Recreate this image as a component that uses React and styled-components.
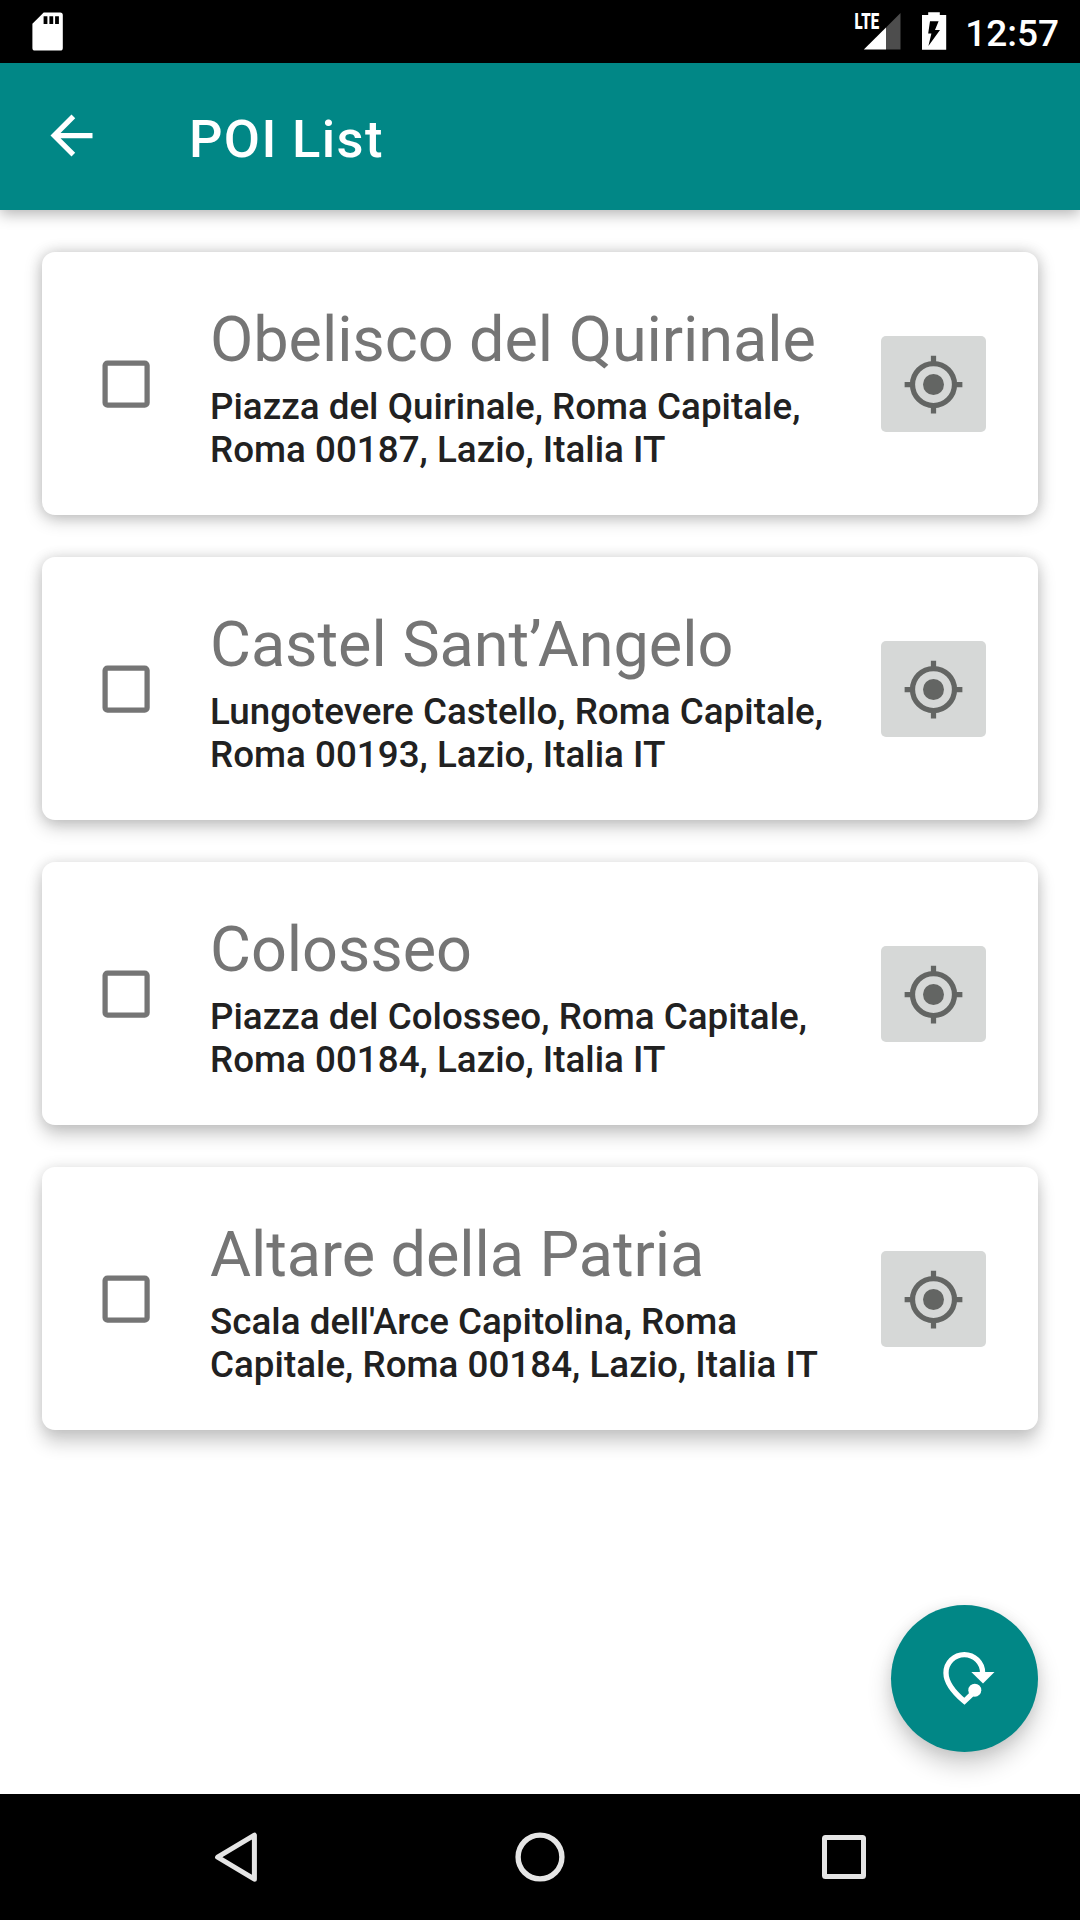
import React from "react";
import styled, { createGlobalStyle } from "styled-components";

const GlobalStyle = createGlobalStyle`
  * { box-sizing: border-box; }
  body { margin: 0; background: #fff; font-family: Roboto, "Noto Sans", sans-serif; }
`;

const Screen = styled.div`
  width: 1080px;
  height: 1920px;
  display: flex;
  flex-direction: column;
  position: relative;
  overflow: hidden;
  background: #fff;
`;

const StatusBar = styled.div`
  height: 63px;
  flex: none;
  display: flex;
  justify-content: space-between;
  background: #000;
  padding: 0 21px 0 26px;
`;

const StatusGroup = styled.div`
  display: flex;
`;

const Clock = styled.time`
  width: 95px;
  padding-top: 2px;
  text-align: right;
  color: #fff;
  font-size: 37px;
  font-weight: 500;
  line-height: 64px;
  white-space: nowrap;
`;

const AppBar = styled.header`
  height: 147px;
  flex: none;
  display: flex;
  align-items: center;
  background: #018786;
  padding-left: 39.5px;
  box-shadow: 0 4px 14px rgba(0, 0, 0, 0.3);
  z-index: 1;
`;

const BackButton = styled.button`
  width: 63px;
  height: 63px;
  margin: 0 86.5px 2px 0;
  padding: 0;
  border: 0;
  background: none;
  color: #fff;
`;

const ScreenTitle = styled.h1`
  margin: 4px 0 0;
  color: #fff;
  font-size: 52.5px;
  font-weight: 500;
  letter-spacing: 0.026em;
  line-height: 62px;
`;

const List = styled.main`
  flex: 1;
  display: flex;
  flex-direction: column;
  gap: 42px;
  padding: 42px;
`;

const Card = styled.article`
  height: 263px;
  display: flex;
  align-items: flex-start;
  border-radius: 13px;
  background: #fff;
  padding: 51px 52px 0 52px;
  box-shadow: 0 ${(p) => p.$lift}px 18px rgba(0, 0, 0, ${(p) => p.$shade}), 0 0 14px rgba(0, 0, 0, 0.12);
`;

const Checkbox = styled.button`
  width: 64px;
  height: 64px;
  margin: 49px 52px 0 0;
  padding: 0;
  border: 0;
  background: none;
  color: #757575;
`;

const Details = styled.div`
  width: 650px;
  flex: none;
`;

const Name = styled.h2`
  margin: 0 0 8px;
  color: #757575;
  font-size: 63px;
  font-weight: 400;
  letter-spacing: -0.08px;
  line-height: 74px;
  white-space: nowrap;
`;

const Address = styled.p`
  margin: 0;
  color: #212121;
  font-size: 36.75px;
  font-weight: 500;
  letter-spacing: 0.02px;
  line-height: 43px;
`;

const LocateButton = styled.button`
  width: 105px;
  height: 96px;
  flex: none;
  display: flex;
  align-items: center;
  justify-content: center;
  margin: 33px 0 0 21px;
  padding: 0;
  border: 0;
  border-radius: 5px;
  background: #d6d8d7;
  color: #636563;
`;

const Fab = styled.button`
  position: absolute;
  right: 42px;
  bottom: 168px;
  width: 147px;
  height: 147px;
  padding: 0;
  border: 0;
  border-radius: 50%;
  background: #018786;
  color: #fff;
  box-shadow: 0 13px 24px rgba(0, 0, 0, 0.2), 0 2px 14px rgba(0, 0, 0, 0.08);
`;

const NavBar = styled.nav`
  height: 126px;
  flex: none;
  display: flex;
  justify-content: center;
  gap: 178px;
  background: #000;
`;

const NavButton = styled.button`
  width: 126px;
  height: 126px;
  padding: 0;
  border: 0;
  background: none;
  color: #e5e5e5;
`;

const Icon = styled.svg`
  display: block;
  flex: none;
  fill: currentColor;
`;

const places = [
  { name: "Obelisco del Quirinale", address: "Piazza del Quirinale, Roma Capitale, Roma 00187, Lazio, Italia IT", lift: 4, shade: 0.23 },
  { name: "Castel Sant’Angelo", address: "Lungotevere Castello, Roma Capitale, Roma 00193, Lazio, Italia IT", lift: 7, shade: 0.21 },
  { name: "Colosseo", address: "Piazza del Colosseo, Roma Capitale, Roma 00184, Lazio, Italia IT", lift: 10, shade: 0.2 },
  { name: "Altare della Patria", address: "Scala dell'Arce Capitolina, Roma Capitale, Roma 00184, Lazio, Italia IT", lift: 13, shade: 0.19 },
];

const SdCardIcon = () => (
  <Icon width="44" height="63" viewBox="26 0 44 63" color="#fff">
    <path d="M43.7 12.5H60.2a2.6 2.6 0 0 1 2.6 2.6V48a2.6 2.6 0 0 1-2.6 2.6H35a2.6 2.6 0 0 1-2.6-2.6V23.8Z" />
    <path fill="#000" d="M43.6 16.2h3.8V24h-3.8zM49.4 16.2h3.8V24h-3.8zM55.1 16.2h3.8V24h-3.8z" />
  </Icon>
);

const SignalIcon = () => (
  <Icon width="62" height="63" viewBox="850 0 62 63" color="#fff">
    <path fill="#4d4d4d" d="M900.5 13v36.6H886V27.5Z" />
    <path d="M886 27.5v22.1h-22.2Z" />
    <text x="854.6" y="29" fontFamily="Roboto, sans-serif" fontSize="22" fontWeight="900" textLength="24.5" lengthAdjust="spacingAndGlyphs">LTE</text>
  </Icon>
);

const BatteryIcon = () => (
  <Icon width="52" height="63" viewBox="912 0 52 63" color="#fff">
    <path d="M928.2 12.2h11.6V15h6.4v34.8H922V15h6.2Z" />
    <path fill="#000" d="M930 21.2h8.6L935 30h5L928.4 46l3-12.4h-3.2Z" />
  </Icon>
);

const LocateIcon = () => (
  <Icon width="63" height="63" viewBox="0 0 24 24">
    <circle cx="12" cy="12" r="4" />
    <circle cx="12" cy="12" r="8" fill="none" stroke="currentColor" strokeWidth="2" />
    <path d="M11 1h2v3h-2zM11 20h2v3h-2zM1 11h3v2H1zM20 11h3v2h-3z" />
  </Icon>
);

const RouteIcon = () => (
  <Icon width="147" height="147" viewBox="0 0 147 147">
    <path
      d="M91.6 69V67.9A18.3 18.3 0 0 0 55 67.9C55 78 63 87.5 73.4 96.3L82 88"
      fill="none"
      stroke="currentColor"
      strokeWidth="5.3"
    />
    <path d="M80.3 67h23.2L92 78.6Z" />
    <circle cx="83.8" cy="85.2" r="6.5" />
  </Icon>
);

export default function App() {
  return (
    <>
      <GlobalStyle />
      <Screen>
        <StatusBar>
          <SdCardIcon />
          <StatusGroup>
            <SignalIcon />
            <BatteryIcon />
            <Clock>12:57</Clock>
          </StatusGroup>
        </StatusBar>
        <AppBar>
          <BackButton aria-label="Back">
            <Icon width="63" height="63" viewBox="0 0 24 24">
              <path d="M20 11H7.83l5.59-5.59L12 4l-8 8 8 8 1.41-1.41L7.83 13H20v-2z" />
            </Icon>
          </BackButton>
          <ScreenTitle>POI List</ScreenTitle>
        </AppBar>
        <List>
          {places.map((place) => (
            <Card key={place.name} $lift={place.lift} $shade={place.shade}>
              <Checkbox role="checkbox" aria-checked="false" aria-label={place.name}>
                <Icon width="64" height="64" viewBox="0 0 64 64">
                  <rect x="11.1" y="11.2" width="42" height="42" rx="2.4" fill="none" stroke="currentColor" strokeWidth="5.25" />
                </Icon>
              </Checkbox>
              <Details>
                <Name>{place.name}</Name>
                <Address>{place.address}</Address>
              </Details>
              <LocateButton aria-label="Locate">
                <LocateIcon />
              </LocateButton>
            </Card>
          ))}
        </List>
        <Fab aria-label="Plan route">
          <RouteIcon />
        </Fab>
        <NavBar>
          <NavButton aria-label="Back">
            <Icon width="126" height="126" viewBox="0 0 126 126">
              <path d="M44.6 63.2L81.4 41.2V85.2Z" fill="none" stroke="currentColor" strokeWidth="5" strokeLinejoin="round" />
            </Icon>
          </NavButton>
          <NavButton aria-label="Home">
            <Icon width="126" height="126" viewBox="0 0 126 126">
              <circle cx="63" cy="63" r="21.9" fill="none" stroke="currentColor" strokeWidth="5.4" />
            </Icon>
          </NavButton>
          <NavButton aria-label="Overview">
            <Icon width="126" height="126" viewBox="0 0 126 126">
              <rect x="43.5" y="43.5" width="39" height="39" rx="1" fill="none" stroke="currentColor" strokeWidth="5" />
            </Icon>
          </NavButton>
        </NavBar>
      </Screen>
    </>
  );
}
